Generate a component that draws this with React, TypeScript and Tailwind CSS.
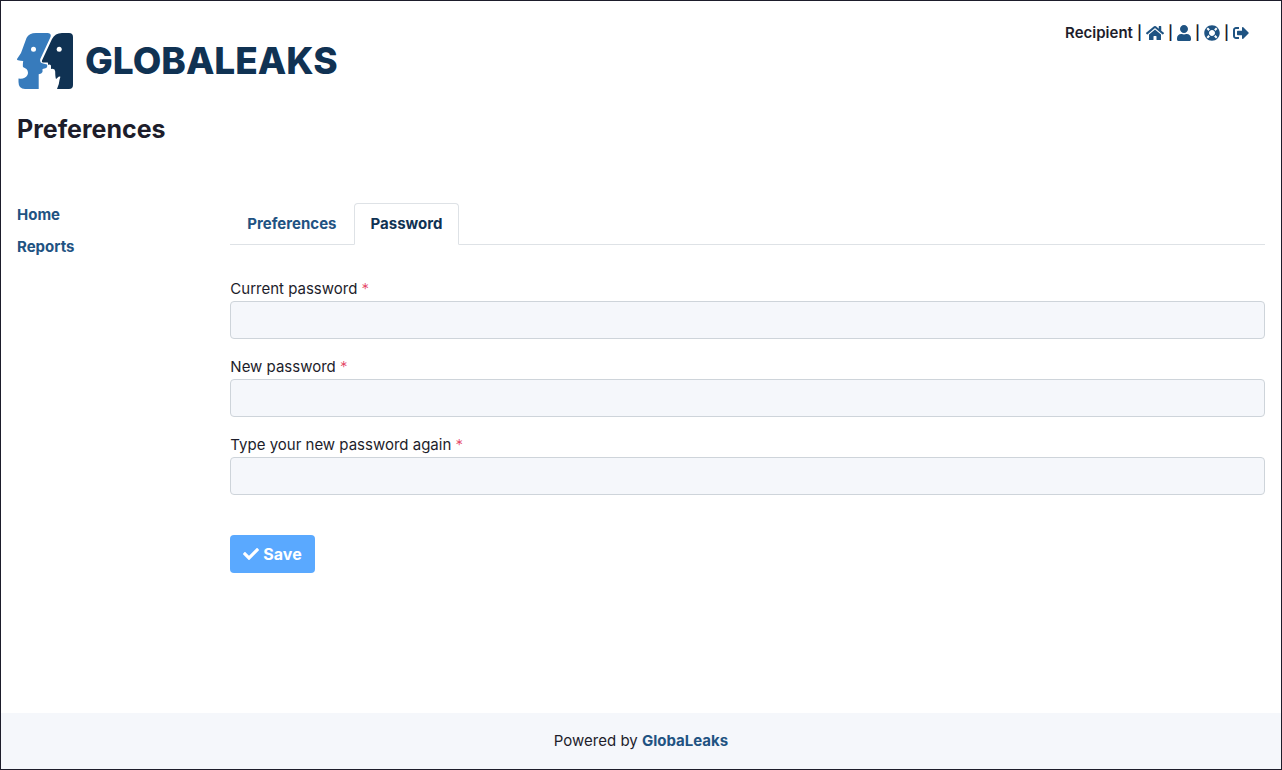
import { FaCheck, FaHome, FaLifeRing, FaSignOutAlt, FaUser } from 'react-icons/fa';

const headerLinks = [
  { label: 'Home', Icon: FaHome, size: 'h-4 w-[18px]' },
  { label: 'Preferences', Icon: FaUser, size: 'h-4 w-[14px]' },
  { label: 'Help', Icon: FaLifeRing, size: 'size-4' },
  { label: 'Log out', Icon: FaSignOutAlt, size: 'size-4' },
];

const fields = [
  { id: 'current-password', label: 'Current password' },
  { id: 'new-password', label: 'New password' },
  { id: 'confirm-password', label: 'Type your new password again' },
];

function Logo() {
  return (
    <a href="#home" className="flex items-center gap-3 text-[#103253]">
      <svg viewBox="0 0 56 56" className="size-14" aria-hidden="true">
        <path
          fill="#377bbc"
          d="M19 0H30.5Q35 .3 33.3 4.5L23.3 26Q22.5 30 26 30.5L30 31.5Q31 34.5 28.5 35.2L25.5 36V39Q24.7 41 21.7 41.3V56H8Q1.5 56 1.5 49V45.5Q8 46.3 10.3 42.3Q12 39 9.5 36L6 34Q5.6 32 6.2 28Q3.5 28 1 27.3Q-.3 26.8 0 26L4 20L9.5 5Q12 0 19 0Z"
        />
        <path
          fill="#103253"
          d="M45 0H52Q56 0 56 4V52Q56 56 52 56H40Q42.3 51 42.5 47L43.4 43.7Q42 43 40.5 44.7L39 46Q38.2 44 38.2 38.5L37.5 36.5Q35.5 35.3 34 36V32.5Q32.5 31 31.3 32L30.8 29.5H26Q24.3 29.3 25 27.5L35 6Q38 0 45 0Z"
        />
        <circle cx="16.5" cy="16.3" r="2.5" fill="#fff" />
        <circle cx="42.2" cy="16.3" r="2.5" fill="#fff" />
      </svg>
      <span className="text-[37px] leading-14 font-extrabold">GLOBALEAKS</span>
    </a>
  );
}

export default function App() {
  return (
    <div className="flex min-h-screen flex-col border border-[#1d1d2b] bg-white font-['Inter',sans-serif] text-[15px] leading-6 text-[#1d1d2b]">
      <header className="flex items-start justify-between px-4 pt-5">
        <div className="pt-3">
          <Logo />
          <h1 className="mt-6 text-[25px] leading-8 font-bold">Preferences</h1>
        </div>
        <div className="flex items-center gap-1 pr-4 font-semibold">
          <span>Recipient</span>
          {headerLinks.map(({ label, Icon, size }) => (
            <span key={label} className="flex items-center gap-1">
              <span className="text-sm leading-6">|</span>
              <a href="#top" aria-label={label} className="text-[#1f5382]">
                <Icon className={size} />
              </a>
            </span>
          ))}
        </div>
      </header>

      <div className="flex flex-1 pt-[58px]">
        <nav className="flex w-1/6 shrink-0 flex-col gap-2 px-4 font-bold text-[#1f5382]">
          <a href="#home">Home</a>
          <a href="#reports">Reports</a>
        </nav>

        <main className="min-w-0 flex-1 px-4 pb-8">
          <div role="tablist" className="flex border-b border-[#dee2e6]">
            <button type="button" role="tab" aria-selected="false" className="px-[17px] py-2 font-bold text-[#1f5382]">
              Preferences
            </button>
            <button
              type="button"
              role="tab"
              aria-selected="true"
              className="-mb-px rounded-t border border-[#dee2e6] border-b-white bg-white px-4 py-2 font-bold text-[#103253]"
            >
              Password
            </button>
          </div>

          <form className="pt-8">
            {fields.map(({ id, label }) => (
              <div key={id} className="mb-4">
                <label htmlFor={id} className="block">
                  {label} <span className="font-light text-[#e4405f]">*</span>
                </label>
                <input
                  id={id}
                  type="password"
                  className="block h-[38px] w-full rounded border border-[#ced4da] bg-[#f5f7fb] px-3"
                />
              </div>
            ))}
            <button
              type="submit"
              className="mt-10 flex h-[38px] items-center gap-1 rounded bg-[#5aa9ff] px-[13px] text-base font-bold text-white"
            >
              <FaCheck className="size-4" />
              Save
            </button>
          </form>
        </main>
      </div>

      <footer className="bg-[#f5f7fb] py-4 text-center">
        Powered by{' '}
        <a href="#globaleaks" className="font-bold text-[#1f5382]">
          GlobaLeaks
        </a>
      </footer>
    </div>
  );
}
